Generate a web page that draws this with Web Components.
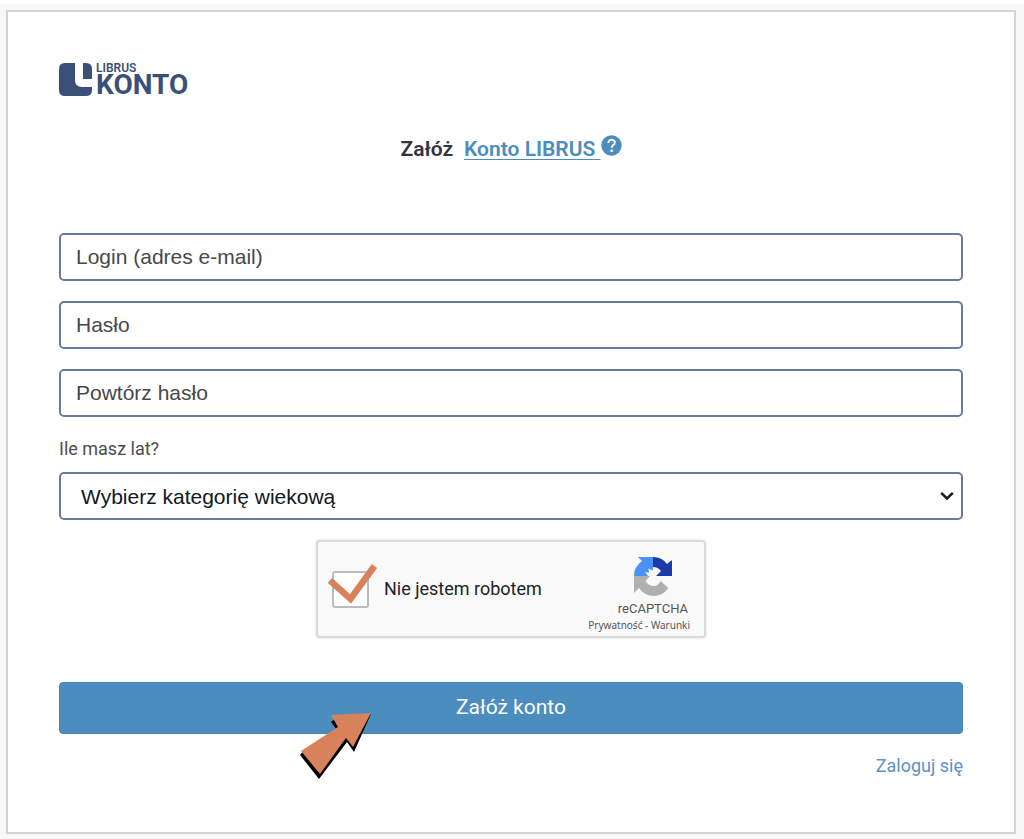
<!DOCTYPE html>
<html lang="pl">
<head>
<meta charset="utf-8">
<meta name="viewport" content="width=device-width, initial-scale=1">
<title>Załóż Konto LIBRUS</title>
<style>
html { background: #f8f8f8; }
body { margin: 0; border-top: 4px solid #fff; font-family: Roboto, "Liberation Sans", sans-serif; color: #2f3640; }
</style>
</head>
<body>
<register-page></register-page>

<script>
const define = (name, html, setup) => {
  const template = document.createElement('template');
  template.innerHTML = html;
  customElements.define(name, class extends HTMLElement {
    constructor() {
      super();
      this.attachShadow({ mode: 'open' }).append(template.content.cloneNode(true));
    }
    connectedCallback() { if (setup) setup(this, this.shadowRoot); }
  });
};

define('librus-logo', `
<style>
:host { display: flex; gap: 4px; height: 34px; color: #3b5079; font-weight: 700; }
svg { display: block; width: 33px; height: 33px; }
.words { display: flex; flex-direction: column; }
.small { font-size: 12px; line-height: 10px; font-weight: 600; }
.big { font-size: 28px; line-height: 24px; }
</style>
<svg viewBox="0 0 33 33" fill="currentColor" aria-hidden="true">
  <path d="M6 0h10v17q0 7 7 7h10v3q0 6-6 6H6q-6 0-6-6V6q0-6 6-6z"/>
  <path d="M24 0h3q6 0 6 6v10h-9z"/>
</svg>
<div class="words"><span class="small">LIBRUS</span><span class="big">KONTO</span></div>`);

define('form-heading', `
<style>
:host { display: block; }
h1 { margin: 0; display: flex; justify-content: center; gap: 11px; font-size: 21px; line-height: 28px; font-weight: 600; }
.name { display: flex; }
a { color: #4c8dbf; text-underline-offset: 3px; text-decoration-thickness: 1px; white-space: pre; }
button { padding: 0; border: 0; background: none; display: block; height: 21px; align-self: flex-start; }
svg { display: block; width: 21px; height: 21px; }
</style>
<h1><span>Załóż</span><span class="name"><a href="#konto">Konto LIBRUS </a><button type="button" aria-label="Pomoc">
<svg viewBox="0 0 21 21"><circle cx="10.5" cy="10.5" r="10.2" fill="#4c8dbf"/><path d="M7.4 8.1C7.4 3.5 14 3.9 13.8 7.8C13.7 10 10.7 10.1 10.7 12.7" fill="none" stroke="#fff" stroke-width="2"/><circle cx="10.7" cy="15.8" r="1.4" fill="#fff"/></svg></button></span></h1>`);

define('text-field', `
<style>
:host { display: block; }
input { display: block; box-sizing: border-box; width: 100%; height: 48px; margin: 0; padding: 0 15px; border: 2px solid #6a7ba2; border-radius: 5px; background: #fff; color: #222; font: 21px "Liberation Sans", Arial, sans-serif; outline: 0; }
input::placeholder { color: #484848; opacity: 1; }
</style>
<input>`, (host, root) => {
  const input = root.querySelector('input');
  input.type = host.getAttribute('type');
  input.placeholder = host.getAttribute('label');
  input.setAttribute('aria-label', host.getAttribute('label'));
});

define('age-select', `
<style>
:host { display: flex; flex-direction: column; gap: 11px; }
label { color: #4c4c4c; font-size: 18px; line-height: 24px; }
.box { display: grid; align-items: center; }
.box > * { grid-area: 1 / 1; }
select { appearance: none; box-sizing: border-box; width: 100%; height: 48px; margin: 0; padding: 0 40px 0 20px; border: 2px solid #6a7ba2; border-radius: 5px; background: #fff; color: #101820; font: 21px "Liberation Sans", Arial, sans-serif; }
svg { justify-self: end; width: 14px; height: 10px; margin-right: 9px; pointer-events: none; }
</style>
<label for="age">Ile masz lat?</label>
<div class="box">
<select id="age"><option>Wybierz kategorię wiekową</option></select>
<svg viewBox="0 0 14 10" fill="none" stroke="#101820" stroke-width="2.5" aria-hidden="true"><path d="M1.2 1.8L7 7.4l5.8-5.6"/></svg>
</div>`);

define('captcha-box', `
<style>
:host { display: flex; justify-content: space-between; align-items: center; box-sizing: border-box; width: 390px; max-width: 100%; height: 98px; padding: 0 14px; border: 2px solid #d9d9d9; border-radius: 4px; background: #f9f9f9; box-shadow: 0 0 3px #ddd; }
label { display: flex; align-items: center; gap: 15px; color: #222; font-size: 18px; line-height: 24px; }
.tick { position: relative; display: block; width: 37px; height: 37px; }
input { appearance: none; display: block; box-sizing: border-box; width: 37px; height: 37px; margin: 0; border: 2px solid #bcbcbc; border-radius: 3px; background: #fff; }
.tick svg { position: absolute; left: -4px; top: -8px; width: 50px; height: 42px; display: none; pointer-events: none; }
input:checked + svg { display: block; }
.brand { display: flex; flex-direction: column; align-items: flex-end; padding-top: 10px; color: #555; }
.brand > svg { width: 40px; height: 40px; margin-right: 17px; }
.name { font-size: 13px; line-height: 18px; margin: 4px 2px 0 0; }
.legal { font-family: "Noto Sans", sans-serif; font-size: 10px; line-height: 14px; white-space: nowrap; }
a { color: inherit; text-decoration: none; }
</style>
<label><span class="tick"><input type="checkbox" checked><svg viewBox="0 0 50 42"><path d="M2 17.5L22.5 36L46.5 3" fill="none" stroke="#d8825c" stroke-width="6.5"/></svg></span>Nie jestem robotem</label>
<div class="brand">
<svg viewBox="0 0 40 40" aria-hidden="true">
<path d="M20 1H5l4 4Q1 11 1 20h14l-3-4 4 .5-.5-4 4.500 2z" fill="#4a90f5"/>
<path d="M20 1q9 0 14 7l5-4v16H23l5-5q-3-4-8-4z" fill="#1c3aa9"/>
<path d="M1 20h16l-4.500 5q3 5 8 5 4.500 0 7-5l8 7q-6 8-15 8Q12 40 6 32L1 37z" fill="#b0b0b0"/>
</svg>
<span class="name">reCAPTCHA</span>
<span class="legal"><a href="#prywatnosc">Prywatność</a> - <a href="#warunki">Warunki</a></span>
</div>`);

define('submit-button', `
<style>
:host { display: block; position: relative; }
button { display: block; box-sizing: border-box; width: 100%; height: 52px; padding: 0 0 2px; border: 1px solid #4385b7; border-radius: 4px; background: #4c8dbf; color: #fff; font: 400 21px Roboto, sans-serif; }
svg { position: absolute; left: 241px; top: 31px; width: 72px; height: 67px; pointer-events: none; }
</style>
<button type="submit"><slot></slot></button>
<svg viewBox="0 0 72 67" aria-hidden="true">
<path d="M0 42L4 37L37 17L31 9L35 6L71 1L54 39L47 29L19 66z" fill="#000"/>
<path d="M1 38L38 14L31 2L71 0L53 34L46 25L20 61z" fill="#d8825c"/>
</svg>`);

define('register-page', `
<style>
:host { display: block; padding: 6px 8px 6px 6px; }
main { box-sizing: border-box; padding: 51px 51px 54px; border: 2px solid #d4d4d4; background: #fff; }
form-heading { margin-top: 38px; }
form { display: flex; flex-direction: column; gap: 20px; margin-top: 70px; }
captcha-box { align-self: center; }
submit-button { margin-top: 24px; }
.login { align-self: flex-end; color: #5b93c6; font-size: 18px; line-height: 24px; text-decoration: none; }
</style>
<main>
<librus-logo></librus-logo>
<form-heading></form-heading>
<form>
<text-field type="email" label="Login (adres e-mail)"></text-field>
<text-field type="password" label="Hasło"></text-field>
<text-field type="password" label="Powtórz hasło"></text-field>
<age-select></age-select>
<captcha-box></captcha-box>
<submit-button>Załóż konto</submit-button>
<a class="login" href="#zaloguj">Zaloguj się</a>
</form>
</main>`);
</script>
</body>
</html>
